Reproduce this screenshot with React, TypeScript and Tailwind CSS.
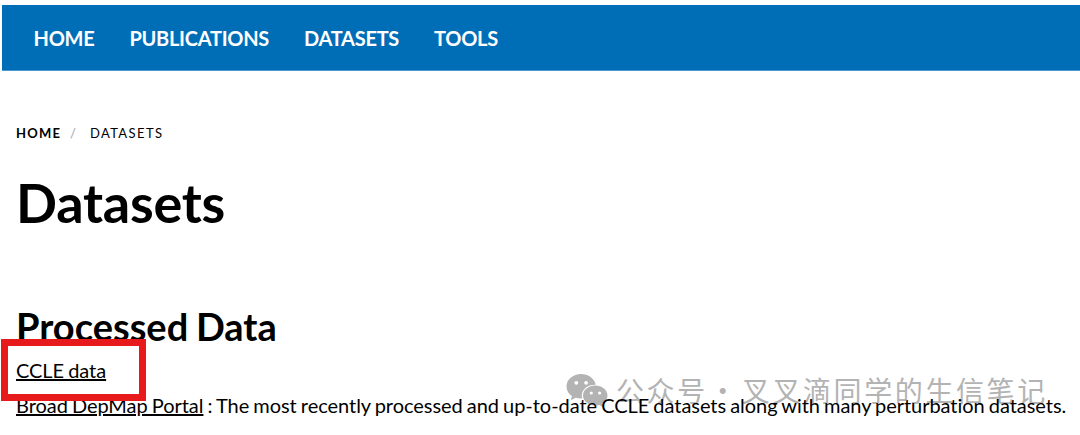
const navItems = ["HOME", "PUBLICATIONS", "DATASETS", "TOOLS"];

function Navbar() {
  return (
    <nav className="ml-[2px] flex h-[66px] items-center gap-[35px] border-b border-[#4d99cd] bg-[#006eb7] pl-[31.5px] text-xl font-bold tracking-[-0.27px] text-white">
      {navItems.map((item) => (
        <a key={item} href="#">
          {item}
        </a>
      ))}
    </nav>
  );
}

function Watermark() {
  return (
    <div className="absolute top-[370px] left-[566px] flex h-10 items-center text-[#b3b3b3]">
      <svg width="42" height="34" viewBox="0 0 42 34" fill="currentColor">
        <path d="M15 1C7 1 .5 6.600 .5 13.400c0 3.900 2.100 7.300 5.400 9.600L4.700 27.300l5-2.600c1.700.5 3.500.8 5.300.8h1.200c-.3-1-.4-1.900-.4-2.900 0-6.200 5.900-10.900 13-10.900h.9C28.600 5.600 22.400 1 15 1Z" />
        <path d="M41.500 22.500c0-5.600-5.500-10-12.200-10S17 16.900 17 22.500s5.500 10 12.300 10c1.400 0 2.800-.2 4.100-.6l3.900 2.100-1-3.500c3.100-1.800 5.200-4.700 5.200-8Z" />
        <g fill="white">
          <circle cx="10.300" cy="9.800" r="1.900" />
          <circle cx="20.100" cy="9.800" r="1.900" />
          <circle cx="25.300" cy="20" r="1.600" />
          <circle cx="33.600" cy="20" r="1.600" />
        </g>
      </svg>
      <span className="ml-2 font-['Noto_Sans_CJK_SC',sans-serif] text-[28px] leading-10 tracking-[2.6px] whitespace-nowrap">
        公众号
      </span>
      <span className="w-[34px] pr-1 text-center font-['Noto_Sans_CJK_SC',sans-serif] text-[28px] leading-10">·</span>
      <span className="font-['Noto_Sans_CJK_SC',sans-serif] text-[28px] leading-10 tracking-[2.6px] whitespace-nowrap">
        叉叉滴同学的生信笔记
      </span>
    </div>
  );
}

export default function App() {
  return (
    <main className="relative h-[435px] overflow-hidden bg-white pt-[5px] font-['Lato',sans-serif] text-black">
      <Watermark />
      <Navbar />
      <div className="relative pl-4">
        <div className="mt-[53px] flex h-5 items-center text-[13px] tracking-[1.4px]">
          <span className="font-bold tracking-[1.2px]">HOME</span>
          <span className="ml-[9px] text-gray-400">/</span>
          <span className="ml-[12.5px]">DATASETS</span>
        </div>
        <h1 className="mt-[27px] text-[54px] leading-[64px] font-bold tracking-[-0.25px]">Datasets</h1>
        <h2 className="mt-[68px] text-[38px] leading-[46px] font-bold [word-spacing:-1.5px]">Processed Data</h2>
        <div className="text-xl leading-[30px] tracking-[-0.04px] whitespace-nowrap [word-spacing:-1px] [font-variant-ligatures:none]">
          <p className="mt-[6px]">
            <a href="#" className="underline">CCLE data</a>
          </p>
          <p className="mt-[5px]">
            <a href="#" className="underline">Broad DepMap Portal</a> : The most recently processed and up-to-date CCLE
            datasets along with many perturbation datasets.
          </p>
        </div>
      </div>
      <div className="absolute top-[339px] left-px h-[62px] w-[145px] border-[7px] border-[#e71b1b]" />
    </main>
  );
}
